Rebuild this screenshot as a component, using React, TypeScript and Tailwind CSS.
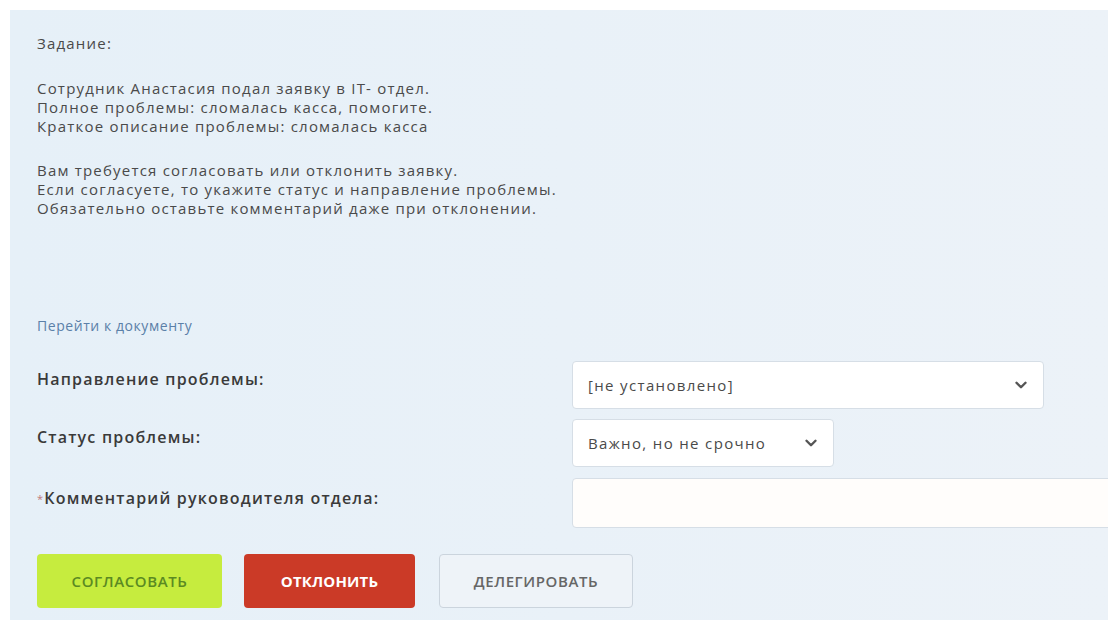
import React from "react";
import { ChevronDown } from "lucide-react";

const font = { fontFamily: '"Open Sans", "Noto Sans", sans-serif' };

function Select({ value, width }: { value: string; width: string }) {
  return (
    <div
      className={`${width} h-[48px] flex items-center justify-between pl-[15px] pr-[13px] bg-white border border-[#d6dee6] rounded-[4px] text-[15px] tracking-[0.09em] text-[#4a4a4a]`}
    >
      <span>{value}</span>
      <ChevronDown className="w-[18px] h-[18px] text-[#555]" strokeWidth={3.2} />
    </div>
  );
}

export default function App() {
  return (
    <div className="w-[1114px] h-[624px] bg-white overflow-hidden" style={font}>
      <div className="ml-[10px] mt-[10px] w-[1098px] h-[610px] bg-gradient-to-r from-[#e6f0f8] to-[#ecf2f8] pl-[27px] pt-[24px] overflow-hidden text-[#4a4a4a] text-[15px] leading-[19px] tracking-[0.08em]">
        <p>Задание:</p>

        <div className="mt-[26px]">
          <p>Сотрудник Анастасия подал заявку в IT- отдел.</p>
          <p>Полное проблемы: сломалась касса, помогите.</p>
          <p>Краткое описание проблемы: сломалась касса</p>
        </div>

        <div className="mt-[25px]">
          <p>Вам требуется согласовать или отклонить заявку.</p>
          <p>Если согласуете, то укажите статус и направление проблемы.</p>
          <p>Обязательно оставьте комментарий даже при отклонении.</p>
        </div>

        <a className="block mt-[98px] text-[14px] tracking-[0.04em] text-[#5b80a8]">Перейти к документу</a>

        <div className="mt-[26px] grid grid-cols-[535px_1fr] gap-y-[10px]">
          <div className="pt-[9px] text-[16px] font-semibold text-[#3a3a3a]">Направление проблемы:</div>
          <Select value="[не установлено]" width="w-[472px]" />

          <div className="pt-[9px] text-[16px] font-semibold text-[#3a3a3a]">Статус проблемы:</div>
          <Select value="Важно, но не срочно" width="w-[262px]" />

          <div className="pt-[11px] text-[16px] font-semibold text-[#3a3a3a] mt-[1px]">
            <span className="text-[11px] align-top text-[#c0787a] font-normal">*</span>Комментарий руководителя отдела:
          </div>
          <div className="mt-[1px] h-[50px] w-[600px] bg-[#fffdfb] border border-[#d6dee6] rounded-[4px]" />
        </div>

        <div className="mt-[26px] flex gap-[22px] text-[15px] tracking-[0.04em]">
          <button className="w-[185px] h-[54px] rounded-[4px] bg-[#c6ec3e] text-[#5b8a22] font-semibold">
            СОГЛАСОВАТЬ
          </button>
          <button className="w-[171px] h-[54px] rounded-[4px] bg-[#cb3a27] text-white font-bold tracking-[0.01em]">
            ОТКЛОНИТЬ
          </button>
          <button className="ml-[2px] w-[194px] h-[54px] rounded-[4px] bg-[#eef3f8] border border-[#cbd4dd] text-[#666] font-semibold">
            ДЕЛЕГИРОВАТЬ
          </button>
        </div>
      </div>
    </div>
  );
}
